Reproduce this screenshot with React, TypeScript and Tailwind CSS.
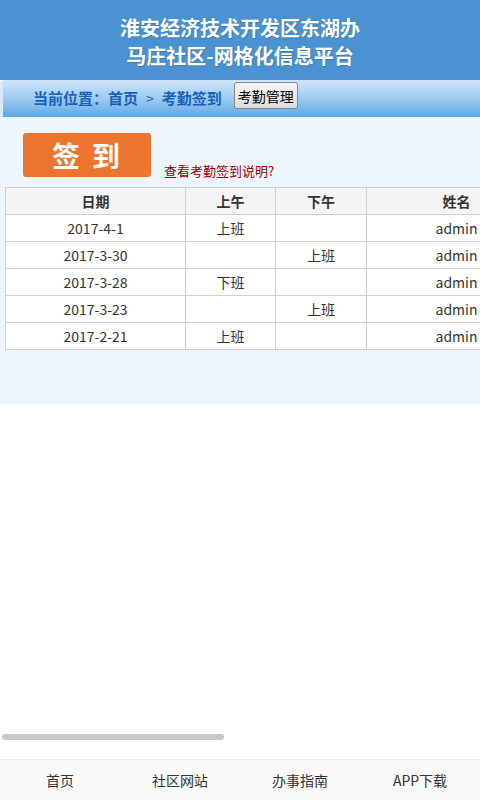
import React from 'react';

const rows = [
  { date: '2017-4-1', am: '上班', pm: '', name: 'admin' },
  { date: '2017-3-30', am: '', pm: '上班', name: 'admin' },
  { date: '2017-3-28', am: '下班', pm: '', name: 'admin' },
  { date: '2017-3-23', am: '', pm: '上班', name: 'admin' },
  { date: '2017-2-21', am: '上班', pm: '', name: 'admin' },
];

const navItems = ['首页', '社区网站', '办事指南', 'APP下载'];

const font = { fontFamily: '"Noto Sans CJK SC", "Noto Sans", sans-serif' };

const App = () => {
  return (
    <div className="w-[480px] h-[800px] flex flex-col bg-white overflow-hidden" style={font}>
      {/* header */}
      <div className="h-[80px] bg-[#4a92d1] flex flex-col items-center justify-center pt-[4px] text-white text-[20px] font-bold leading-[28px] [text-shadow:1px_1px_1px_rgba(0,0,0,0.15)]">
        <div>淮安经济技术开发区东湖办</div>
        <div>马庄社区-网格化信息平台</div>
      </div>

      {/* breadcrumb */}
      <div className="h-[37px] flex items-center bg-gradient-to-b from-[#cfe6fa] via-[#9ccbf1] to-[#5ea7e6] rounded-tl-[4px] border-l-[3px] border-[#d7eafb]">
        <div className="pl-[30px] text-[15px] font-bold text-[#1762b8] flex items-center">
          <span>当前位置：首页</span>
          <span className="mx-[8px] text-[14px] font-normal">&gt;</span>
          <span>考勤签到</span>
        </div>
        <button className="ml-[12px] -mt-[6px] h-[27px] px-[3px] text-[14px] text-black border border-[#8a8a8a] rounded-[3px] bg-gradient-to-b from-[#f6f6f6] to-[#dcdcdc] leading-none">
          考勤管理
        </button>
      </div>

      {/* content */}
      <div className="h-[287px] bg-[#eef5fd] overflow-hidden">
        <div className="flex items-end pt-[16px] pl-[23px]">
          <div className="w-[128px] h-[44px] rounded-[3px] bg-[#ec742f] flex items-center justify-center text-white text-[28px] font-bold tracking-[12px] pl-[10px]">
            签到
          </div>
          <a className="ml-[13px] text-[13px] text-[#9a0000] leading-[16px] mb-[-2px]">查看考勤签到说明?</a>
        </div>

        <div className="mt-[10px] pl-[5px]">
          <table className="w-[1040px] border-collapse text-[14px] text-[#333] table-fixed bg-white">
            <colgroup>
              <col className="w-[180px]" />
              <col className="w-[90px]" />
              <col className="w-[91px]" />
              <col className="w-[180px]" />
              <col />
            </colgroup>
            <thead>
              <tr className="h-[27px] bg-[#f5f5f5]">
                <th className="border border-[#cfcfcf] font-bold">日期</th>
                <th className="border border-[#cfcfcf] font-bold">上午</th>
                <th className="border border-[#cfcfcf] font-bold">下午</th>
                <th className="border border-[#cfcfcf] font-bold">姓名</th>
                <th className="border border-[#cfcfcf] font-bold"></th>
              </tr>
            </thead>
            <tbody>
              {rows.map((r) => (
                <tr key={r.date} className="h-[27px]">
                  <td className="border border-[#cfcfcf] text-center">{r.date}</td>
                  <td className="border border-[#cfcfcf] text-center">{r.am}</td>
                  <td className="border border-[#cfcfcf] text-center">{r.pm}</td>
                  <td className="border border-[#cfcfcf] text-center">{r.name}</td>
                  <td className="border border-[#cfcfcf] text-center"></td>
                </tr>
              ))}
            </tbody>
          </table>
        </div>
      </div>

      {/* empty page area with scroll indicator */}
      <div className="flex-1 flex flex-col justify-end pb-[19px] pl-[2px]">
        <div className="w-[222px] h-[6px] rounded-full bg-[#c8c8c8]" />
      </div>

      {/* bottom nav */}
      <div className="h-[41px] border-t border-[#ececec] bg-[#f9f9f9] grid grid-cols-4 items-center text-[14px] text-[#333]">
        {navItems.map((n) => (
          <div key={n} className="text-center">{n}</div>
        ))}
      </div>
    </div>
  );
};

export default App;
